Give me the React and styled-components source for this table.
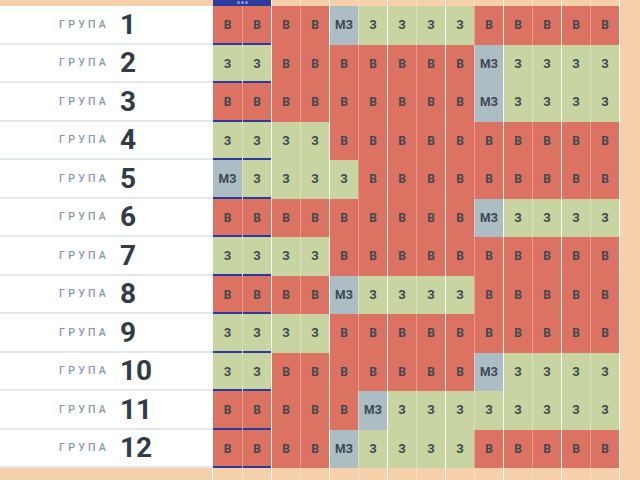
import React from 'react';
import styled, { createGlobalStyle } from 'styled-components';

const GlobalStyle = createGlobalStyle`
  body {
    margin: 0;
    font-family: Roboto, "Liberation Sans", sans-serif;
  }
`;

const PEACH = '#f6cfab';

const Page = styled.div`
  width: 640px;
  height: 480px;
  overflow: hidden;
  background: ${PEACH};
  display: flex;
  flex-direction: column;
`;

const Line = styled.div`
  display: flex;
  height: ${(p) => p.$h}px;
  flex-shrink: 0;
`;

const Corner = styled.div`
  width: 213px;
  flex-shrink: 0;
  background: ${PEACH};
`;

const Label = styled.div`
  width: 213px;
  flex-shrink: 0;
  box-sizing: border-box;
  background: #fff;
  border-bottom: 2px solid #e3e8ec;
  display: flex;
  align-items: center;
  padding-left: 59px;
  gap: 10px;
`;

const Word = styled.span`
  font-size: 10.5px;
  letter-spacing: 3.3px;
  color: #8797a7;
  font-weight: 500;
  width: 51px;
`;

const Num = styled.span`
  font-size: 28px;
  font-weight: 700;
  color: #323c46;
`;

const colors = {
  В: '#dc7262',
  З: '#c8d4a1',
  МЗ: '#adbdc4',
};

const Cell = styled.div`
  width: 29px;
  flex-shrink: 0;
  box-sizing: border-box;
  background: ${(p) => (p.$kind ? colors[p.$kind] : PEACH)};
  border-left: ${(p) =>
    p.$index === 0
      ? 'none'
      : p.$index % 2 === 0
      ? '1px solid rgba(255,255,255,0.9)'
      : '1px solid rgba(255,255,255,0.3)'};
  box-shadow: ${(p) => (p.$active ? 'inset 0 -2px 0 #2b3a9c' : 'none')};
  display: flex;
  align-items: center;
  justify-content: center;
  font-size: 12px;
  font-weight: 700;
  color: #3d4953;
`;

const ActiveHead = styled.div`
  width: 58px;
  flex-shrink: 0;
  background: #2b3c9e;
  display: flex;
  justify-content: center;
  align-items: flex-start;
  padding-top: 1px;
  gap: 1px;
`;

const Dot = styled.span`
  width: 3px;
  height: 3px;
  border-radius: 50%;
  background: #8c9ad6;
`;

const Tail = styled.div`
  flex: 1;
  background: ${PEACH};
  border-left: 1px solid #fff;
`;

const FootCorner = styled(Corner)`
  border-right: 1px solid #fff;
  box-sizing: border-box;
`;

const rows = [
  'В В В В МЗ З З З З В В В В В',
  'З З В В В В В В В МЗ З З З З',
  'В В В В В В В В В МЗ З З З З',
  'З З З З В В В В В В В В В В',
  'МЗ З З З З В В В В В В В В В',
  'В В В В В В В В В МЗ З З З З',
  'З З З З В В В В В В В В В В',
  'В В В В МЗ З З З З В В В В В',
  'З З З З В В В В В В В В В В',
  'З З В В В В В В В МЗ З З З З',
  'В В В В В МЗ З З З З З З З З',
  'В В В В МЗ З З З З В В В В В',
].map((r) => r.split(' '));

const cols = Array.from({ length: 14 }, (_, i) => i);

export default function App() {
  return (
    <Page>
      <GlobalStyle />
      <Line $h={6}>
        <Corner />
        <ActiveHead>
          <Dot />
          <Dot />
          <Dot />
        </ActiveHead>
        {cols.slice(2).map((i) => (
          <Cell key={i} $index={i} />
        ))}
        <Tail />
      </Line>
      {rows.map((row, r) => (
        <Line key={r} $h={38.5}>
          <Label>
            <Word>ГРУПА</Word>
            <Num>{r + 1}</Num>
          </Label>
          {row.map((v, i) => (
            <Cell key={i} $index={i} $kind={v} $active={i < 2}>
              {v}
            </Cell>
          ))}
          <Tail />
        </Line>
      ))}
      <Line $h={12}>
        <FootCorner />
        {cols.map((i) => (
          <Cell key={i} $index={i} />
        ))}
        <Tail />
      </Line>
    </Page>
  );
}
